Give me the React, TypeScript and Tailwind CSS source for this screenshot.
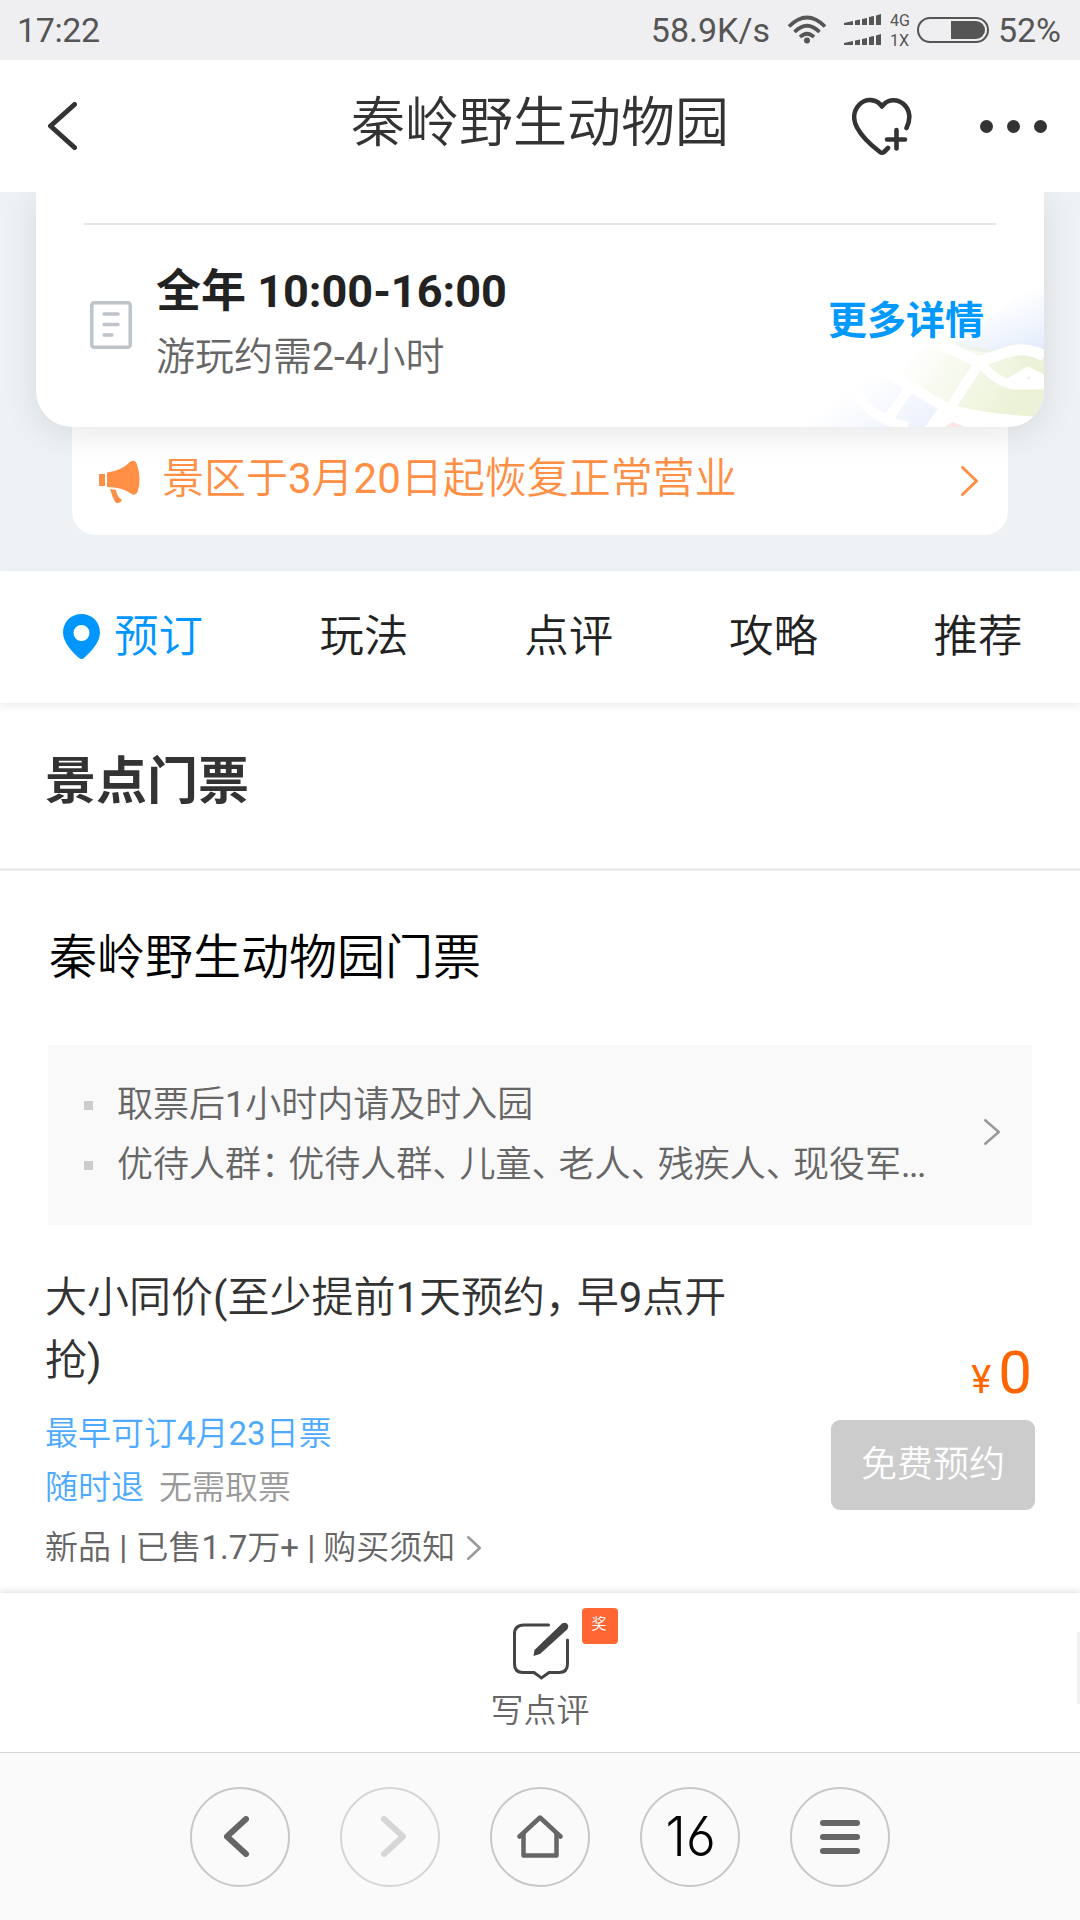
import type { ReactNode } from 'react';

const TABS = ['玩法', '点评', '攻略', '推荐'];

interface ChevronProps {
  className: string;
  width: number;
  height: number;
  stroke: number;
}

function Chevron({ className, width, height, stroke }: ChevronProps) {
  const h = stroke / 2;
  return (
    <svg className={`shrink-0 ${className}`} width={width} height={height} fill="none">
      <path
        d={`M${h} ${h}L${width - h} ${height / 2}L${h} ${height - h}`}
        stroke="currentColor"
        strokeWidth={stroke}
        strokeLinecap="round"
        strokeLinejoin="round"
      />
    </svg>
  );
}

// full-width punctuation set on a narrower advance
function Punct({ children }: { children: ReactNode }) {
  return <span className="tracking-[-0.245em]">{children}</span>;
}

function StatusBar() {
  return (
    <div className="flex h-[60px] items-center bg-[#efeff1] pl-[17px] pr-[19px] text-[34px] leading-none text-[#555]">
      <span className="tracking-[-0.4px]">17:22</span>
      <span className="ml-auto">58.9K/s</span>
      <svg className="ml-[17px]" width="40" height="30" viewBox="0 0 40 30" fill="none" stroke="currentColor" strokeWidth="3.6">
        <path d="M2 11.500Q20 -6.500 38 11.500" />
        <path d="M7.500 17Q20 4.500 32.500 17" />
        <path d="M13 22Q20 15.500 27 22" />
        <circle cx="20" cy="25.500" r="3" fill="currentColor" stroke="none" />
      </svg>
      <svg className="ml-[17px]" width="38" height="32" viewBox="0 0 38 32" fill="currentColor">
        {[0, 20].map((y) => (
          <g key={y} transform={`translate(0 ${y})`}>
            <path d="M0 9L9 7V11H0ZM11 6.500L16 5.500V11H11ZM18 5L23 4V11H18ZM25 3L30 2V11H25ZM32 1.500L37 0V11H32Z" />
          </g>
        ))}
      </svg>
      <div className="ml-[8px] flex flex-col gap-[4px] pt-[2px] text-[16px] leading-4">
        <span>4G</span>
        <span>1X</span>
      </div>
      <div className="ml-[7px] flex h-[26px] w-[72px] justify-end rounded-full border-2 border-[#555] p-[2px]">
        <div className="w-[34px] rounded-r-full bg-[#555]" />
      </div>
      <span className="ml-[9px]">52%</span>
    </div>
  );
}

function Header() {
  return (
    <header className="relative flex h-[132px] items-center justify-between bg-white pl-[48px] pr-[33px] text-[#333]">
      <Chevron className="rotate-180" width={29} height={48} stroke={5} />
      <h1 className="absolute inset-x-0 top-[24px] text-center text-[54px] leading-[80px]">秦岭野生动物园</h1>
      <div className="flex items-center">
        <svg width="60" height="58" viewBox="0 0 60 58" fill="none" stroke="currentColor" strokeWidth="4.600" strokeLinecap="round" strokeLinejoin="round">
          <path d="M54.500 31C59 22 58 13 52 7.500C45 1 35 2 30 9.500C25 2 14 .5 7 8C1 14.500 1 23 5 30.500C10 40 20 49 28 55Q30 56.500 32 55L36 51" />
          <path d="M35 42.500H53M44.500 33V51.500" />
        </svg>
        <div className="ml-[68px] flex gap-[14px]">
          <i className="size-[13px] rounded-full bg-[#333]" />
          <i className="size-[13px] rounded-full bg-[#333]" />
          <i className="size-[13px] rounded-full bg-[#333]" />
        </div>
      </div>
    </header>
  );
}

function MapCorner() {
  return (
    <svg className="absolute bottom-0 right-0" width="244" height="150" viewBox="0 0 244 150" fill="none">
      <defs>
        <linearGradient id="blue" x1="205" y1="22" x2="228" y2="80" gradientUnits="userSpaceOnUse">
          <stop offset="0" stopColor="#e2ebfc" stopOpacity="0" />
          <stop offset="1" stopColor="#e2ebfc" />
        </linearGradient>
        <linearGradient id="green" x1="110" y1="75" x2="205" y2="140" gradientUnits="userSpaceOnUse">
          <stop offset="0" stopColor="#ecf3d8" stopOpacity="0" />
          <stop offset="1" stopColor="#ebf2d6" />
        </linearGradient>
        <linearGradient id="pale" x1="75" y1="95" x2="120" y2="160" gradientUnits="userSpaceOnUse">
          <stop offset="0" stopColor="#ebf0fc" stopOpacity="0" />
          <stop offset="1" stopColor="#ebf0fc" />
        </linearGradient>
      </defs>
      <path d="M150 70L244 0V85L190 76Z" fill="url(#blue)" />
      <path d="M0 150L70 95L140 128L125 150Z" fill="url(#pale)" />
      <path d="M88 94L140 60L178 70L192 73L220 66L244 74V144L156 140L137 128Z" fill="url(#green)" />
      <path d="M143 150L153 145L165 150ZM228 141L244 131V142Z" fill="#fbe8e4" />
      <g stroke="#fff" strokeLinejoin="round">
        <path d="M128 60Q160 76 178 85Q195 79 208 75Q226 69 244 79" strokeWidth="11" />
        <path d="M178 88L153 126L139 152" strokeWidth="10" />
        <path d="M182 88Q198 106 214 108H244" strokeWidth="9" />
        <path d="M206 104L228 91L244 99V108H206Z" strokeWidth="3" fill="#fff" />
        <path d="M86 92Q118 116 147 131Q178 142 244 145" strokeWidth="10" />
        <path d="M57 116Q68 140 108 150M109 112L88 142" strokeWidth="10" />
      </g>
      <circle cx="229" cy="101" r="1.800" fill="#eef2f0" />
    </svg>
  );
}

function InfoCard() {
  return (
    <section className="h-[379px] overflow-hidden bg-[#eef2f5] px-[36px]">
      <div className="relative z-10 h-[235px] rounded-b-[36px] bg-white shadow-[0_6px_36px_rgba(0,0,0,0.1)]">
        <div className="absolute inset-0 overflow-hidden rounded-b-[36px]">
          <MapCorner />
        </div>
        <div className="relative mx-[48px] h-[33px] border-b-2 border-[#e5e5e5]" />
        <div className="relative flex items-center pl-[54px] pr-[60px]">
          <svg className="mt-[35px]" width="42" height="48" viewBox="0 0 42 48" fill="none" stroke="#bec4c9" strokeWidth="3.500" strokeLinecap="round">
            <rect x="1.750" y="1.750" width="38.500" height="44.500" rx="2.500" />
            <path d="M14 13H28M14 23.500H28M14 34H22" />
          </svg>
          <div className="ml-[24px] mt-[34px]">
            <p className="font-[Roboto,'Noto_Sans_CJK_SC',sans-serif] text-[45px] font-bold leading-[66px] text-[#222]">
              全年 10:00-16:00
            </p>
            <p className="text-[39px] leading-[64px] text-[#666]">游玩约需2-4小时</p>
          </div>
          <span className="ml-auto mt-[28px] font-[Roboto,'Noto_Sans_CJK_SC',sans-serif] text-[39px] font-bold text-[#0099ff]">
            更多详情
          </span>
        </div>
      </div>
      <div className="mx-[36px] flex h-[108px] items-center rounded-b-[24px] bg-white pl-[27px] pr-[30px] text-[#ff8f45]">
        <svg width="41" height="43" viewBox="0 0 41 43" fill="currentColor">
          <path d="M0 14H6V26H0ZM8 12.500Q22 11 31 2Q35 -1 37.500 3Q43 18 38.500 32Q36 37 31 33Q23 27 8 27ZM11 29L17 30Q18 37 23 40Q22 43.500 17 43Q14 39 11 29Z" />
        </svg>
        <span className="-mt-[6px] ml-[22px] text-[42px]">景区于3月20日起恢复正常营业</span>
        <Chevron className="ml-auto" width={17} height={30} stroke={3} />
      </div>
    </section>
  );
}

function TabBar() {
  return (
    <nav className="relative z-10 flex h-[132px] items-center overflow-x-clip bg-white pl-[63px] text-[44.500px] text-[#222] shadow-[0_3px_8px_rgba(0,0,0,0.08)]">
      <svg className="-mt-[2px] shrink-0" width="37" height="45" viewBox="0 0 37 45" fill="#0096ff">
        <path fillRule="evenodd" d="M18.500 0C8 0 0 8 0 18.500C0 28 9 38 16 44Q18.500 46 21 44C28 38 37 28 37 18.500C37 8 29 0 18.500 0ZM18.500 11A8 8 0 1 1 18.500 27A8 8 0 1 1 18.500 11Z" />
      </svg>
      <span className="ml-[14px] w-[205.500px] shrink-0 pt-[1px] text-[#0096ff]">预订</span>
      {TABS.map((tab) => (
        <span key={tab} className="w-[204.700px] shrink-0 pt-[1px]">
          {tab}
        </span>
      ))}
    </nav>
  );
}

function NoticeLine({ children }: { children: ReactNode }) {
  return (
    <li className="flex h-[60px] items-center">
      <i className="mr-[24px] size-[9px] bg-[#ccc]" />
      <span className="whitespace-nowrap">{children}</span>
    </li>
  );
}

function Tickets() {
  return (
    <main className="h-[890px] overflow-hidden">
      <h2 className="h-[168px] border-b-3 border-[#ededed] pl-[45px] pt-[39px] font-[Roboto,'Noto_Sans_CJK_SC',sans-serif] text-[51px] font-bold leading-[80px] text-[#333]">
        景点门票
      </h2>
      <h3 className="mt-[52px] pl-[49px] text-[48px] leading-[70px] text-black">秦岭野生动物园门票</h3>
      <div className="mx-[48px] mt-[52px] flex h-[180px] items-center bg-[#f9f9f9] pl-[36px] pr-[32px] text-[36px] text-[#666]">
        <ul>
          <NoticeLine>取票后1小时内请及时入园</NoticeLine>
          <NoticeLine>
            优待人群<Punct>：</Punct>优待人群<Punct>、</Punct>儿童<Punct>、</Punct>老人<Punct>、</Punct>残疾人
            <Punct>、</Punct>现役军<span className="tracking-[-1.5px]">...</span>
          </NoticeLine>
        </ul>
        <Chevron className="-mt-[6px] ml-auto text-[#999]" width={16} height={26} stroke={2.5} />
      </div>
      <div className="flex justify-between pl-[45px] pr-[45px] pt-[41px]">
        <div className="text-[33px]">
          <p className="w-[700px] text-[42px] leading-[63px] text-[#333]">
            大小同价(至少提前1天预约<Punct>，</Punct>早9点开
            <br />
            抢)
          </p>
          <p className="mt-[15px] leading-[54px] text-[#4daaff]">最早可订4月23日票</p>
          <p className="flex gap-[15px] leading-[54px] text-[#999]">
            <span className="text-[#4daaff]">随时退</span>
            <span>无需取票</span>
          </p>
          <p className="mt-[6px] flex items-center leading-[54px] text-[#666]">
            新品 | 已售1.7万+ | 购买须知
            <Chevron className="ml-[12px] text-[#999]" width={14} height={24} stroke={2.5} />
          </p>
        </div>
        <div className="flex flex-col items-end pt-[70px]">
          <p className="mr-[3px] text-[60px] leading-[74px] text-[#ff6600]">
            <span className="mr-[7px] text-[38px]">¥</span>0
          </p>
          <button className="mt-[3px] h-[90px] w-[204px] rounded-[9px] bg-[#ccc] text-[36px] text-white">免费预约</button>
        </div>
      </div>
    </main>
  );
}

function ReviewBar() {
  return (
    <div className="relative z-10 flex h-[159px] flex-col items-center bg-white pt-[29px] text-[#666] shadow-[0_-2px_6px_rgba(0,0,0,0.12)]">
      <div className="relative left-px">
        <svg width="56" height="58" viewBox="0 0 56 58" fill="none" stroke="#444" strokeWidth="3" strokeLinecap="round">
          <path d="M35.500 3H11Q1.500 3 1.500 12V42Q1.500 50.500 10 50.500H21L28.500 56L36 50.500H46Q54.500 50.500 54.500 42V18" />
          <path d="M20.500 34L21.500 28L49 1.500Q53 -.5 55 3Q56 6 53 8.500L27 32Z" fill="#444" stroke="none" />
        </svg>
        <span className="absolute -top-[14px] left-[69px] flex size-[36px] items-center justify-center rounded-[4px] bg-[#ff6633] pb-[3px] pr-[2px] text-[15px] text-white">
          奖
        </span>
      </div>
      <span className="mt-[7px] text-[33px] leading-[48px]">写点评</span>
      <div className="absolute right-0 top-[39px] h-[72px] w-[3px] bg-[#f0f0f0]" />
    </div>
  );
}

function BrowserBar() {
  const circle = 'flex size-[100px] items-center justify-center rounded-full border-2 border-[#c8c8c8]';
  return (
    <footer className="flex h-[168px] items-center justify-center gap-[50px] border-t border-[#dcdcdc] bg-[#fafafa] text-[#666]">
      <div className={circle}>
        <Chevron className="mr-[7px] rotate-180" width={25} height={41} stroke={6} />
      </div>
      <div className="flex size-[100px] items-center justify-center rounded-full border-2 border-[#d6d6d6]">
        <Chevron className="ml-[7px] text-[#d6d6d6]" width={25} height={41} stroke={6} />
      </div>
      <div className={circle}>
        <svg width="46" height="43" viewBox="0 0 46 43" fill="none" stroke="currentColor" strokeWidth="4.500" strokeLinecap="round" strokeLinejoin="round">
          <path d="M2.500 21.500L23 2.500L43.500 21.500" />
          <path d="M6.500 19V40.500H39.500V19" />
        </svg>
      </div>
      <div className={circle}>
        <span className="ml-[2px] scale-x-[0.94] font-[Inter] text-[55px] font-light leading-none text-black [font-feature-settings:'ss01']">16</span>
      </div>
      <div className={circle}>
        <div className="flex flex-col gap-[8px]">
          <i className="h-[6px] w-[40px] rounded-full bg-[#666]" />
          <i className="h-[6px] w-[40px] rounded-full bg-[#666]" />
          <i className="h-[6px] w-[40px] rounded-full bg-[#666]" />
        </div>
      </div>
    </footer>
  );
}

export default function App() {
  return (
    <div className="flex h-[1920px] w-[1080px] flex-col overflow-hidden bg-white font-[Roboto,'Noto_Sans_CJK_SC_DemiLight','Noto_Sans_CJK_SC',sans-serif]">
      <StatusBar />
      <Header />
      <InfoCard />
      <TabBar />
      <Tickets />
      <ReviewBar />
      <BrowserBar />
    </div>
  );
}
